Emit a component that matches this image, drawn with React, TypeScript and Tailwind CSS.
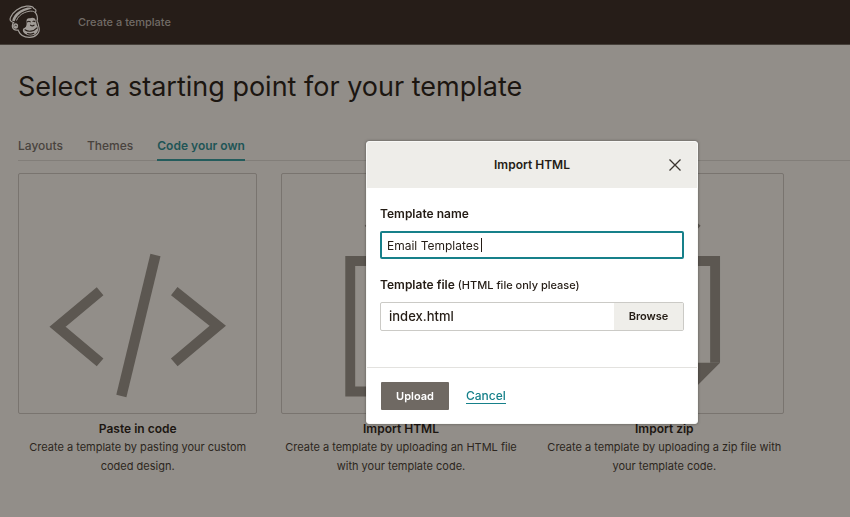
import { useState } from "react";
import type { ReactNode } from "react";

const tabs = ["Layouts", "Themes", "Code your own"];

function Logo() {
  return (
    <svg viewBox="0 0 36 36" className="h-9 w-9" fill="none" aria-hidden="true">
      {/* head and cap outline */}
      <path
        d="M7.500 18.500C4.300 17.600 3.200 16 4.600 13.200C7 8 13 3 20.500 2.200C24 1.900 27.200 2.300 27.600 4.200C30 5.200 30.600 6.800 29.300 8.400C31.300 11 32 13.500 31 17C32.600 19 32.200 21 33 23.500C34.300 28.500 30 33.200 23.500 33.400C17.500 33.500 13.800 30.500 12 26C8.500 26.800 6.200 24.500 6.300 22C6.400 20.400 6.900 19.200 7.500 18.500Z"
        fill="#261d18"
        stroke="#a29d98"
        strokeWidth="1.200"
      />
      {/* cap */}
      <path
        d="M6.200 16.800C7 11.500 12 6.500 20 4C22 3.400 25 3.300 25.800 4.200C24.500 5.300 21.500 5.700 18.500 7C13.500 9.200 10 12.500 8.600 17.200Z"
        fill="#a29d98"
      />
      <path d="M10.500 16.500C12.500 11.500 17 8.500 23 7.300C25.500 6.900 27.500 7.200 29 8.300" stroke="#a29d98" strokeWidth="1" />
      {/* face */}
      <path
        d="M20.500 17.200C20.300 14.800 22 13.700 24 14.300C26 13.200 29 13.600 29.600 16C30 18 30.600 19.500 30.800 21C33 23.500 32.600 28.500 29 30.500C25 32.400 19.500 31.500 17.300 28C16.300 26.200 17 24.300 18.800 23.800C20.800 22.500 20.800 19.800 20.500 17.200Z"
        fill="#a29d98"
      />
      <path
        d="M21.500 17.800C22.300 17.200 23.400 17.200 24.200 17.800M27 17.400C27.600 17 28.400 17.100 28.900 17.600M24.600 21.200C25.600 22 27 22 28 21.200M19 25.800C22.500 28.300 27.500 27.600 31 23.800M21.500 29.600C23.500 30.300 26 30.100 27.800 29.200"
        stroke="#261d18"
        strokeWidth="1.100"
        strokeLinecap="round"
      />
      {/* ear */}
      <ellipse cx="9.600" cy="22" rx="2.500" ry="2.800" fill="#a29d98" />
      <path d="M8.800 22.300C9 20.800 10.400 20.800 10.800 22.300" stroke="#261d18" strokeWidth=".8" />
    </svg>
  );
}

function CodeIcon() {
  return (
    <svg viewBox="0 0 240 242" className="w-full" fill="none" stroke="#5c5751" strokeWidth="10.500" aria-hidden="true">
      <path d="M82 118.500L39 154.500L82 190.500" />
      <path d="M157 118.500L201 153.500L157 190.500" />
      <path d="M138 82L103.500 224.500" />
    </svg>
  );
}

function HtmlIcon() {
  return (
    <svg viewBox="0 0 240 242" className="w-full" fill="none" stroke="#5c5751" strokeWidth="10" aria-hidden="true">
      <path d="M98 88H69V220H171V88H142" />
      <path d="M120 170V32M87 56L120 26L153 56" />
    </svg>
  );
}

function ZipIcon() {
  return (
    <svg viewBox="0 0 240 242" className="w-full" fill="none" aria-hidden="true">
      <path d="M98 88H69V220H142M171 191V88H142" stroke="#5c5751" strokeWidth="10" />
      <path d="M137 191H176L142 225H137Z" fill="#5c5751" />
      <path d="M120 170V32M87 56L120 26L153 56" stroke="#5c5751" strokeWidth="10" />
    </svg>
  );
}

type Option = {
  title: string;
  text: string;
  icon: ReactNode;
};

const options: Option[] = [
  {
    title: "Paste in code",
    text: "Create a template by pasting your custom coded design.",
    icon: <CodeIcon />,
  },
  {
    title: "Import HTML",
    text: "Create a template by uploading an HTML file with your template code.",
    icon: <HtmlIcon />,
  },
  {
    title: "Import zip",
    text: "Create a template by uploading a zip file with your template code.",
    icon: <ZipIcon />,
  },
];

function ImportDialog() {
  const [name, setName] = useState("Email Templates");
  const [fileName, setFileName] = useState("index.html");

  return (
    <form
      role="dialog"
      aria-labelledby="dialog-title"
      onSubmit={(event) => event.preventDefault()}
      className="w-full max-w-[332px] overflow-hidden rounded-[3px] border border-[#f8f8f6] bg-white text-[#241c15] shadow-[0_0_3px_rgba(0,0,0,0.4)]"
    >
      <div className="grid grid-cols-[1fr_auto_1fr] items-center bg-[#eeede9] px-4 py-3">
        <h2 id="dialog-title" className="col-start-2 text-[12px] leading-[22px] font-semibold">
          Import HTML
        </h2>
        <button type="button" aria-label="Close" className="justify-self-end">
          <svg viewBox="0 0 12 12" className="h-3 w-3" stroke="#3a342f" strokeWidth="1.300" aria-hidden="true">
            <path d="M.5 .5L11.500 11.500M11.500 .5L.5 11.500" />
          </svg>
        </button>
      </div>

      <div className="px-[13px] pt-4 pb-9">
        <label htmlFor="template-name" className="block text-[12px] leading-5 font-semibold">
          Template name
        </label>
        <div className="relative mt-[7px]">
          <input
            id="template-name"
            type="text"
            autoFocus
            value={name}
            onChange={(event) => setName(event.target.value)}
            className="block h-7 w-full rounded-[2px] border-2 border-[#16808a] px-[5px] text-[12px] caret-transparent outline-none"
          />
          <span className="absolute top-[7px] left-[101px] h-[14px] w-px bg-[#241c15]" />
        </div>

        <label htmlFor="file-name" className="mt-4 block text-[12px] leading-5 font-semibold">
          Template file <span className="text-[11px] font-medium">(HTML file only please)</span>
        </label>
        <div className="mt-[7px] flex h-[29px] rounded-[2px] border border-[#cbcac6]">
          <input
            id="file-name"
            type="text"
            value={fileName}
            onChange={(event) => setFileName(event.target.value)}
            className="min-w-0 flex-1 px-2 text-[13px] font-medium outline-none"
          />
          <button type="button" className="w-[69px] bg-[#efeeea] text-[11px] font-semibold">
            Browse
          </button>
        </div>
      </div>

      <div className="flex items-center gap-[17px] border-t border-[#e3e2df] px-[14px] pt-[14px] pb-[13px]">
        <button type="submit" className="h-7 w-[68px] rounded-[1px] bg-[#6f6963] text-[11px] font-semibold text-white">
          Upload
        </button>
        <a href="#" className="border-b border-[#16808a] text-[12px] leading-[14px] font-medium text-[#16808a]">
          Cancel
        </a>
      </div>
    </form>
  );
}

export default function App() {
  const [active, setActive] = useState("Code your own");

  return (
    <div className="min-h-screen bg-[#928e89] font-[Inter,'Liberation_Sans',sans-serif] text-[#1c1611]">
      <header className="flex h-[45px] items-center gap-9 border-b border-[#46403a] bg-[#261d18] px-[6px]">
        <Logo />
        <span className="text-[11px] font-medium text-[#716b66]">Create a template</span>
      </header>

      <main className="pt-6 pl-[18px]">
        <h1 className="text-[27px] leading-9 font-normal">Select a starting point for your template</h1>

        <nav className="mt-7 flex gap-6 border-b border-[#827e79]">
          {tabs.map((tab) => (
            <button
              key={tab}
              type="button"
              onClick={() => setActive(tab)}
              className={
                tab === active
                  ? "-mb-px border-b-2 border-[#245c5c] pt-[3px] pb-[3px] text-[12px] leading-5 font-semibold text-[#1f5556]"
                  : "-mb-px border-b-2 border-transparent pt-[3px] pb-[3px] text-[12px] leading-5 font-medium text-[#49433e]"
              }
            >
              {tab}
            </button>
          ))}
        </nav>

        <div className="mt-3 grid max-w-[766px] grid-cols-3 gap-6">
          {options.map((option) => (
            <section key={option.title} className="text-center">
              <div className="rounded-[2px] border border-[#79746f]">{option.icon}</div>
              <h3 className="mt-[6px] text-[12px] leading-[18px] font-semibold">{option.title}</h3>
              <p className="text-[11px] leading-[19px] text-[#2c2620]">{option.text}</p>
            </section>
          ))}
        </div>
      </main>

      <div className="fixed inset-0 flex items-start justify-end pt-[141px] pr-[152px]">
        <ImportDialog />
      </div>
    </div>
  );
}
